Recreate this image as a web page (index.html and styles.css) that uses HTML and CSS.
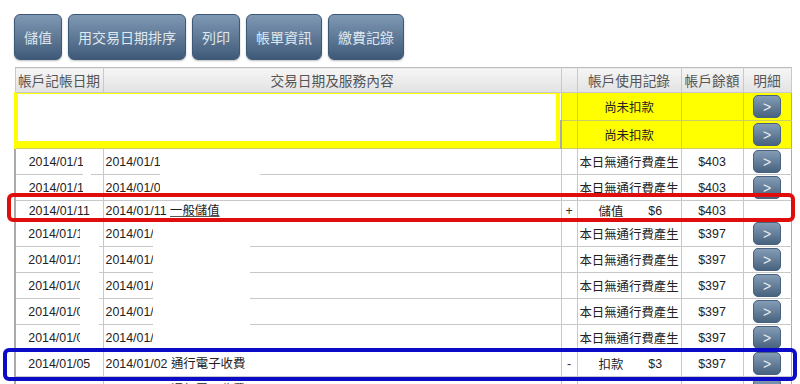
FILE: index.html
```html
<!DOCTYPE html>
<html lang="zh-Hant">
<head>
<meta charset="utf-8">
<title>帳戶使用記錄</title>
<link rel="stylesheet" href="styles.css">
</head>
<body>
<div class="page">
  <div class="toolbar">
    <button class="tool-btn">儲值</button>
    <button class="tool-btn">用交易日期排序</button>
    <button class="tool-btn">列印</button>
    <button class="tool-btn">帳單資訊</button>
    <button class="tool-btn">繳費記錄</button>
  </div>
  <div class="table-wrap">
    <table class="ledger">
      <colgroup>
        <col class="c-post"><col class="c-desc"><col class="c-sign"><col class="c-usage"><col class="c-bal"><col class="c-detail">
      </colgroup>
      <thead>
        <tr><th>帳戶記帳日期</th><th>交易日期及服務內容</th><th></th><th>帳戶使用記錄</th><th>帳戶餘額</th><th>明細</th></tr>
      </thead>
      <tbody>
        <tr class="pending">
          <td class="pending-box" rowspan="2" colspan="2"><div class="pending-inner"></div></td>
          <td></td><td class="usage">尚未扣款</td><td></td><td class="detail"><button class="go">&gt;</button></td>
        </tr>
        <tr class="pending">
          <td></td><td class="usage">尚未扣款</td><td></td><td class="detail"><button class="go">&gt;</button></td>
        </tr>
        <tr><td class="post">2014/01/11</td><td class="desc">2014/01/11</td><td class="sign"></td><td class="usage">本日無通行費產生</td><td class="bal">$403</td><td class="detail"><button class="go">&gt;</button></td></tr>
        <tr><td class="post">2014/01/11</td><td class="desc">2014/01/08</td><td class="sign"></td><td class="usage">本日無通行費產生</td><td class="bal">$403</td><td class="detail"><button class="go">&gt;</button></td></tr>
        <tr><td class="post">2014/01/11</td><td class="desc">2014/01/11 <span class="link">一般儲值</span></td><td class="sign">+</td><td class="usage"><div class="split"><span>儲值</span><span>$6</span></div></td><td class="bal">$403</td><td class="detail"></td></tr>
        <tr><td class="post">2014/01/10</td><td class="desc">2014/01/10</td><td class="sign"></td><td class="usage">本日無通行費產生</td><td class="bal">$397</td><td class="detail"><button class="go">&gt;</button></td></tr>
        <tr><td class="post">2014/01/10</td><td class="desc">2014/01/09</td><td class="sign"></td><td class="usage">本日無通行費產生</td><td class="bal">$397</td><td class="detail"><button class="go">&gt;</button></td></tr>
        <tr><td class="post">2014/01/09</td><td class="desc">2014/01/08</td><td class="sign"></td><td class="usage">本日無通行費產生</td><td class="bal">$397</td><td class="detail"><button class="go">&gt;</button></td></tr>
        <tr><td class="post">2014/01/08</td><td class="desc">2014/01/07</td><td class="sign"></td><td class="usage">本日無通行費產生</td><td class="bal">$397</td><td class="detail"><button class="go">&gt;</button></td></tr>
        <tr><td class="post">2014/01/07</td><td class="desc">2014/01/06</td><td class="sign"></td><td class="usage">本日無通行費產生</td><td class="bal">$397</td><td class="detail"><button class="go">&gt;</button></td></tr>
        <tr><td class="post">2014/01/05</td><td class="desc">2014/01/02 通行電子收費</td><td class="sign">-</td><td class="usage"><div class="split"><span>扣款</span><span>$3</span></div></td><td class="bal">$397</td><td class="detail"><button class="go">&gt;</button></td></tr>
        <tr><td class="post">2013/12/31</td><td class="desc">2013/12/30 通行電子收費</td><td class="sign">-</td><td class="usage"><div class="split"><span>扣款</span><span>$30</span></div></td><td class="bal">$400</td><td class="detail"><button class="go">&gt;</button></td></tr>
      </tbody>
    </table>
    <div class="redact redact-a"></div>
    <div class="redact redact-b"></div>
    <div class="redact redact-c"></div>
    <div class="redact redact-d"></div>
    <div class="mark mark-red"></div>
    <div class="mark mark-blue"></div>
  </div>
</div>
</body>
</html>
```
FILE: styles.css
```css
html, body {
  margin: 0;
  overflow: hidden;
  background: #fff;
}
body {
  font-family: "Liberation Sans", "Noto Sans CJK TC", sans-serif;
  color: #222;
}
.page {
  padding: 14px 0 0 14px;
}
.toolbar {
  display: flex;
  gap: 6px;
}
.tool-btn {
  height: 46px;
  padding: 0 9px;
  border: 1px solid #3e5877;
  border-radius: 6px;
  background: linear-gradient(#7f98b4, #3f5a79);
  color: #dfe7ef;
  font: 14px "Noto Sans CJK TC", sans-serif;
  box-shadow: 0 1px 2px rgba(0, 0, 0, 0.25);
}
.table-wrap {
  position: relative;
  margin-top: 7px;
  width: 776px;
}
.ledger {
  width: 776px;
  table-layout: fixed;
  border-collapse: collapse;
  font-size: 12.4px;
}
.c-post { width: 88px; }
.c-desc { width: 458px; }
.c-sign { width: 16px; }
.c-usage { width: 104px; }
.c-bal { width: 62px; }
.c-detail { width: 48px; }
.ledger th {
  height: 24px;
  padding: 0;
  background: linear-gradient(#f6f6f6, #e2e2e2);
  border: 1px solid #c9c9c9;
  border-top-color: #bbb;
  color: #555;
  font-weight: normal;
  font-size: 13.7px;
  font-family: "Noto Sans CJK TC", sans-serif;
  white-space: nowrap;
}
.ledger td {
  padding: 0 2px;
  line-height: 18px;
  border: 1px solid #c8c8c8;
  white-space: nowrap;
  overflow: hidden;
}
.ledger td:first-child {
  border-left: 2px solid #aaa;
}
.ledger td:last-child {
  border-right: 1px solid #aaa;
}
.post { text-align: center; }
.desc { text-align: left; }
.sign { text-align: center; color: #333; }
.usage {
  text-align: center;
  font-family: "Noto Sans CJK TC", sans-serif;
}
.ledger td.usage { padding: 0; }
.bal { text-align: center; }
.ledger td.detail {
  padding: 1px 0;
  text-align: center;
}
.split {
  display: flex;
  gap: 25px;
  padding-left: 21px;
}
.split span:last-child {
  font-family: "Liberation Sans", sans-serif;
}
.link {
  font-family: "Noto Sans CJK TC", sans-serif;
  text-decoration: underline;
  text-decoration-color: #555;
}
.go {
  display: block;
  margin: 0 auto;
  width: 28px;
  height: 23px;
  padding: 0;
  border: 1px solid #48627f;
  border-radius: 5px;
  background: linear-gradient(#849cb6, #48637f);
  color: #e6edf4;
  font: 14px "Liberation Sans", sans-serif;
}
.pending td {
  background: #ffff00;
  border-color: #cccc66;
}
.ledger .pending td.detail {
  padding: 2px 0 2px;
}
.ledger td.pending-box {
  padding: 1px 4px 6px 2px;
  border-left: 2px solid #ffff00;
  vertical-align: top;
}
.pending-inner {
  height: 47px;
  background: #fff;
}
.redact {
  position: absolute;
  background: #fff;
}
.redact-a { left: 69px; top: 82px; width: 8px; height: 48px; }
.redact-b { left: 146px; top: 82px; width: 100px; height: 48px; }
.redact-c { left: 66px; top: 153px; width: 19px; height: 129px; }
.redact-d { left: 139px; top: 153px; width: 97px; height: 129px; }
.mark {
  position: absolute;
  border-style: solid;
  border-width: 4px;
  border-radius: 6px;
  box-sizing: border-box;
}
.mark-red {
  left: -7px;
  top: 126px;
  width: 788px;
  height: 29px;
  border-color: #e00d0d;
}
.mark-blue {
  left: -11px;
  top: 281px;
  width: 794px;
  height: 33px;
  border-color: #0c0cc8;
}
```
